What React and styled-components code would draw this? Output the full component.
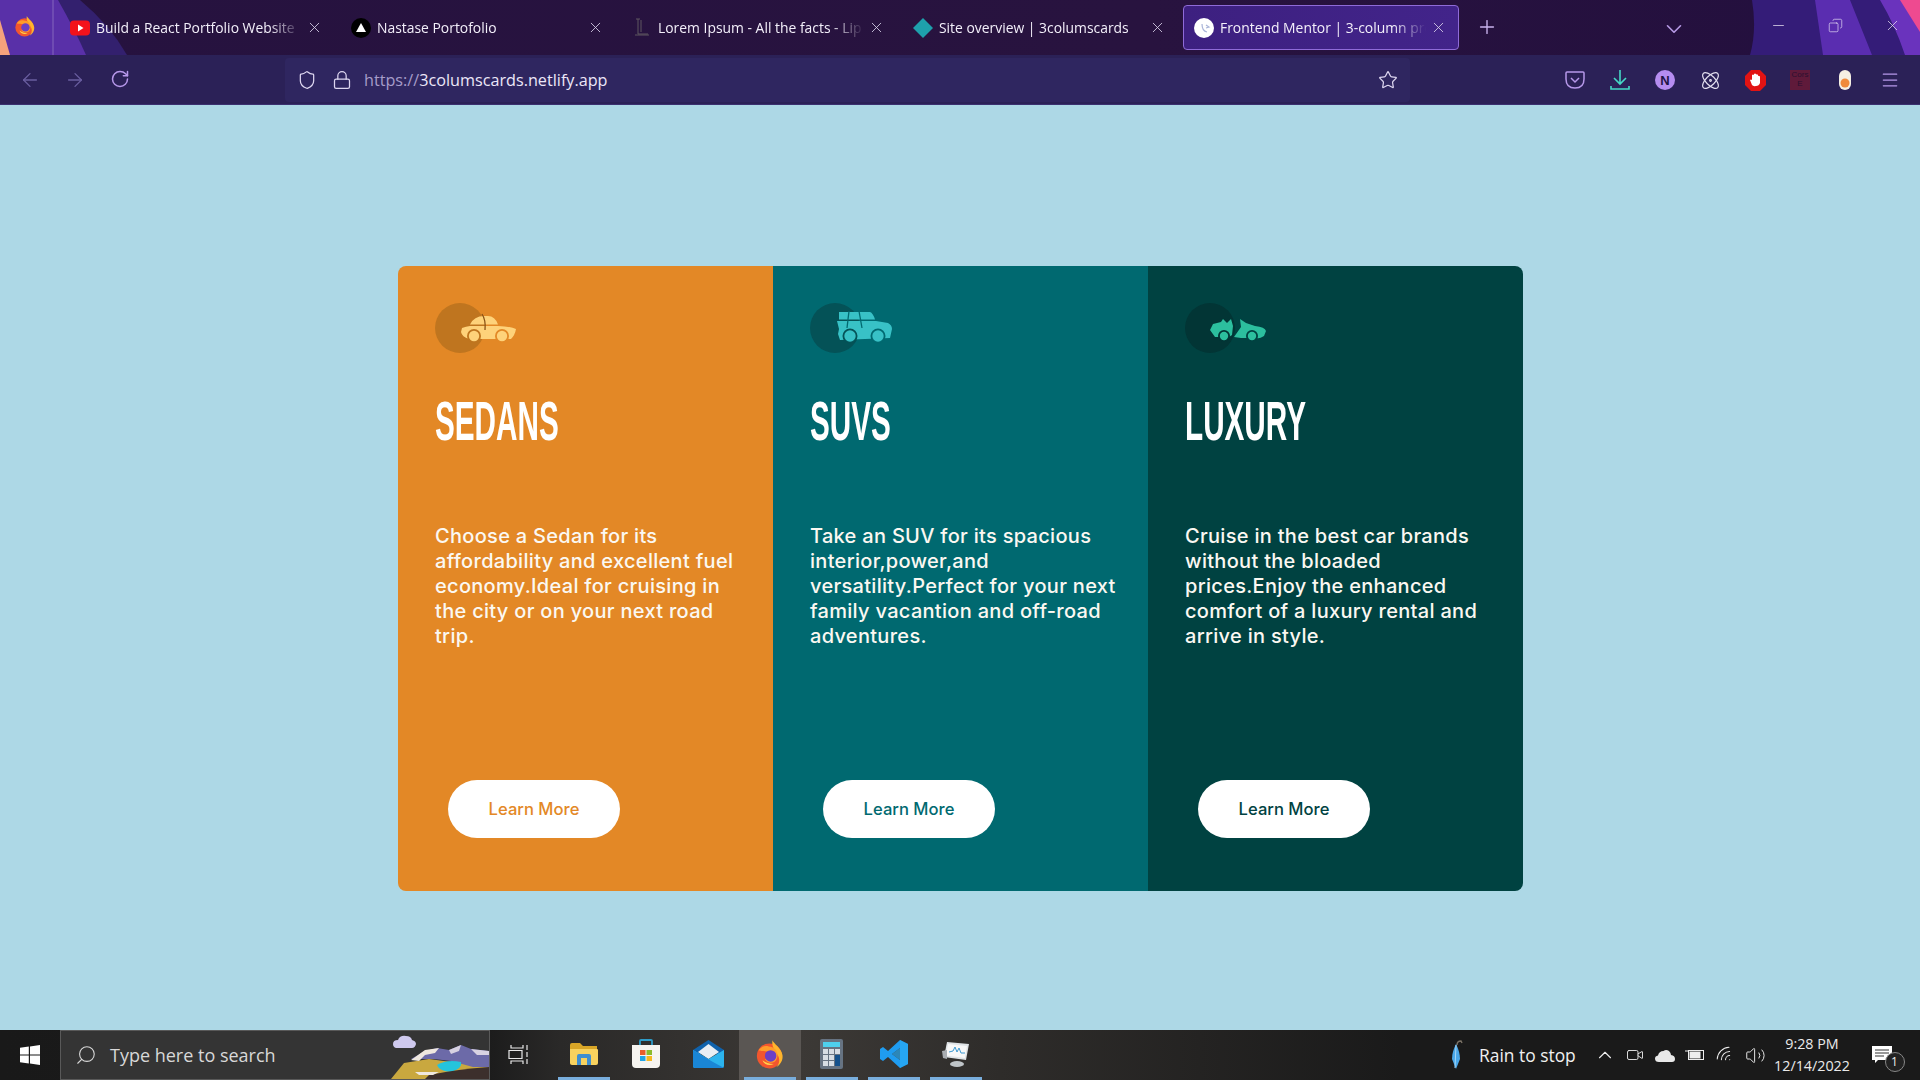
import React from "react";
import styled, { createGlobalStyle } from "styled-components";
import { ArrowLeft, ArrowRight, RotateCw, Shield, Lock, Star, X, Plus, ChevronDown, Minus, Copy, Atom, Menu, Search, ChevronUp, Volume2, Wifi, Video } from "lucide-react";

const Global = createGlobalStyle`
  html, body { margin: 0; padding: 0; width: 1920px; height: 1080px; overflow: hidden; background: #add8e6; }
  * { box-sizing: border-box; }
`;
const Page = styled.div`
  width: 1920px; height: 1080px; display: flex; flex-direction: column;
  font-family: "Open Sans", "Liberation Sans", sans-serif;
`;
const TabBar = styled.div`
  position: relative; height: 55px; display: flex; align-items: flex-start;
  padding: 5px 0 0 59px; gap: 5px; overflow: hidden;
  background: linear-gradient(90deg, #26123f, #28133f 60%, #230f3e);
`;
const ThemeArt = styled.svg`
  position: absolute; inset: 0; width: 1920px; height: 55px;
`;
const FoxSlot = styled.div`
  position: absolute; left: 14px; top: 15px; width: 22px; height: 22px;
`;
const Tab = styled.div`
  position: relative; width: 276px; height: 45px; flex: none; display: flex; align-items: center;
  padding-left: 10px; border-radius: 4px; color: #f3effa;
  border: 1px solid ${p => (p.$active ? "#8f6bd8" : "transparent")};
  background: ${p => (p.$active ? "linear-gradient(90deg,#3d2080,#42248a)" : "transparent")};
`;
const FavSlot = styled.span`
  width: 20px; height: 20px; margin-right: 6px; flex: none; display: flex; align-items: center; justify-content: center;
`;
const TabTitle = styled.span`
  width: 206px; white-space: nowrap; font-size: 13.9px; line-height: 20px; padding-top: 1px;
  -webkit-mask-image: linear-gradient(90deg, #000 ${p => (p.$fade ? "84%" : "100%")}, transparent);
  mask-image: linear-gradient(90deg, #000 ${p => (p.$fade ? "84%" : "100%")}, transparent);
`;
const TabClose = styled.span`
  position: absolute; right: 11px; top: 13px; display: flex; color: #d9d2ea;
`;
const NewTab = styled.span`
  position: relative; margin-left: 12px; margin-top: 11px; display: flex; color: #c9b3ee;
`;
const TabList = styled.span`
  position: relative; margin-left: 158px; margin-top: 11px; display: flex; color: #b79ae6;
`;
const WinControls = styled.div`
  position: relative; margin-left: 78px; margin-top: 12px; display: flex; gap: 40px; color: #f2edfa;
`;
const NavBar = styled.div`
  height: 50px; background: #2b2157; display: flex; align-items: center; padding: 1px 0 0 18px;
  border-bottom: 1px solid #3b3170;
`;
const NavBtns = styled.div`
  display: flex; gap: 21px; width: 114px;
`;
const NavBtn = styled.span`
  width: 24px; display: flex; justify-content: center; color: ${p => (p.$dim ? "#6a5ea0" : "#b798ea")};
`;
const UrlBar = styled.div`
  margin-left: 153px; width: 1125px; height: 44px; background: #2f2660; display: flex; align-items: center;
  padding-left: 10px; color: #ddd6f0; border-radius: 4px;
`;
const UrlIcon = styled.span`
  display: flex; width: 24px; margin-right: ${p => p.$gap}px; justify-content: center;
`;
const UrlText = styled.span`
  font-size: 16.2px; color: #ece7f8; white-space: nowrap; flex: 1; margin-left: -1px;
  & > em { font-style: normal; color: #a69cc9; }
`;
const StarSlot = styled.span`
  display: flex; margin-right: 12px;
`;
const Tools = styled.div`
  margin-left: 153px; display: flex; gap: 21px;
`;
const Tool = styled.span`
  width: 24px; height: 24px; display: flex; align-items: center; justify-content: center;
  color: ${p => p.$color || "#b798ea"};
`;
const CorsBadge = styled.span`
  width: 20px; height: 20px; background: #5f1a3a; color: #2b1030; font-size: 8px; line-height: 9px;
  text-align: center; font-family: "Liberation Sans", sans-serif;
`;
const Main = styled.main`
  flex: 1; display: flex; justify-content: center; align-items: flex-start;
  padding: 161px 0 0 1px; background: #add8e6;
`;
const Cards = styled.section`
  display: flex; width: 1125px; height: 625px; border-radius: 8px; overflow: hidden;
`;
const Card = styled.article`
  width: 375px; padding: 37px; display: flex; flex-direction: column; background: ${p => p.$bg};
`;
const CarSvg = styled.svg`
  display: block; width: 84px; height: 50px; flex: none;
`;
const Title = styled.h2`
  margin: 38px 0 0; height: 60px; font-family: "Liberation Sans", sans-serif; font-weight: 700; font-size: 56px;
  line-height: 60px; color: #fff; white-space: nowrap; transform: scaleX(0.53); transform-origin: left center;
  text-transform: uppercase;
`;
const Desc = styled.p`
  margin: 73px 0 0; font-family: Inter, sans-serif; font-weight: 500; font-size: 20px; letter-spacing: 0.3px; line-height: 25px;
  color: #fbf8f2; white-space: nowrap; height: 125px;
`;
const LearnBtn = styled.button`
  margin: 131px 0 0 13px; width: 172px; height: 58px; border: 0; border-radius: 29px; background: #fff;
  color: ${p => p.$fg}; font-family: Inter, sans-serif; font-weight: 500; font-size: 16.6px; padding: 0;
`;
const Taskbar = styled.footer`
  height: 50px; display: flex; align-items: stretch; color: #fff; position: relative;
  background: linear-gradient(90deg, #191919 0, #1c1c1c 490px, #2a2928 560px, #3c3936 800px, #2e2c2a 1000px, #1a1a1a 1400px);
`;
const Start = styled.div`
  width: 60px; display: flex; align-items: center; justify-content: center;
`;
const SearchBox = styled.div`
  width: 430px; background: #343434; border: 1px solid #595959; display: flex;
  align-items: center; padding-left: 14px; color: #d8d8d8; overflow: hidden;
`;
const SearchText = styled.span`
  margin-left: 13px; font-size: 18px; flex: 1; white-space: nowrap;
`;
const TaskView = styled.div`
  width: 63px; display: flex; align-items: center; justify-content: center; padding-right: 6px;
`;
const Tile = styled.div`
  position: relative; width: 62px; display: flex; align-items: center; justify-content: center;
  padding-bottom: 2px;
  background: ${p => (p.$active ? "#5a5653" : "transparent")};
  &::after {
    content: ""; position: absolute; left: 5px; right: 5px; bottom: 0; height: 3px;
    background: ${p => (p.$open ? "#79aedd" : "transparent")};
  }
`;
const Tray = styled.div`
  margin-left: auto; display: flex; align-items: center; padding-right: 18.5px;
`;
const Weather = styled.div`
  display: flex; align-items: center; font-size: 17.4px; color: #f0f0f0; width: 141px; white-space: nowrap; gap: 16px;
`;
const TrayIcon = styled.span`
  width: 30px; display: flex; justify-content: center; color: #eee;
`;
const Clock = styled.div`
  width: 92px; margin-left: -4px; text-align: center; font-size: 14.3px; line-height: 22px; color: #eaeaea; white-space: nowrap;
`;
const Notify = styled.div`
  position: relative; width: 40px; margin-left: 3.5px; display: flex; justify-content: center;
`;
const NotifyCount = styled.span`
  position: absolute; left: 23px; top: 6px; width: 20px; height: 20px; border-radius: 50%; border: 1px solid #888;
  background: #222; color: #eee; font-size: 12px; line-height: 18px; text-align: center;
`;

const Fox = ({ size = 22 }) => (
  <svg width={size} height={size} viewBox="0 0 24 24">
    <circle cx="11.5" cy="13.5" r="10" fill="#f2562e" />
    <path d="M14 1c1 3 7 6 8 12 .6 4-2 8-5 9.500 3-3 3-7 1-10C16 9 13 6 14 1z" fill="#ffb52c" />
    <path d="M3 9c2-3 5-4 8-3 4 0 7 3 7 7 0 2-1 4-2 5-3 2-7 1-8-2 3 1 6 0 6-3 0-2-2-3-5-3-3-1-5 0-6-1z" fill="#ff9c2a" />
    <circle cx="12.500" cy="13.500" r="4.600" fill="#6b3fc4" />
    <path d="M6 17c1 3 5 5 9 3-4 0-6-1-9-3z" fill="#ffd34a" />
  </svg>
);

const CARS = {
  sedan: { circle: "#bf751f", car: "#fed27a", outer: "#e38826", r: 5.5,
    d: "M35 21.500 Q39 13 49 13 L53 13 Q60 13 63 21.500Z M27 25 Q31 23.500 35 23 L63 23 Q76 23.500 81 26 Q80 32 76 36 L34 36 Q27 34 26 29Z",
    wheels: [[39, 33], [67, 33]], lines: ["M47 11 Q51 17 50 27"], line: "#8a5316" },
  suv: { circle: "#045257", car: "#38c1c6", outer: "#006970", r: 6,
    d: "M29 9 H60 Q63 10 65 16.500 H29Z M27 18 H66 L78 20 Q82 22 82 26 L80 35 L30 37 L28 31 L29 26 Z",
    wheels: [[40, 33], [68, 33]], lines: ["M39 8 L37 25", "M49 8 L52 25"], line: "#006970" },
  luxury: { circle: "#023535", car: "#2cbf9e", outer: "#004241", r: 4.5,
    d: "M25 27 L28 21 L36 19 L38 16 L42 20 L46 16 L48 23 L47 32 L44 34 L30 34 Z M49 34 L56 24 L55 16 L61 20 L70 23 Q80 24 81 28 L79 33 Q74 36 72 35 L56 35 Z",
    wheels: [[39, 33], [67, 33]], lines: [], line: "#004241" },
};

const CarIcon = ({ kind }) => {
  const c = CARS[kind];
  return (
    <CarSvg viewBox="0 0 84 50">
      <circle cx="25" cy="25" r="25" fill={c.circle} />
      <path d={c.d} fill={c.car} fillRule="evenodd" />
      {c.lines.map((l, i) => <path key={i} d={l} stroke={c.line} strokeWidth="1.300" fill="none" />)}
      {c.wheels.map(([x, y], i) => (
        <g key={i}>
          <circle cx={x} cy={y} r={c.r + 1.5} fill={i === 0 ? c.circle : c.outer} />
          <circle cx={x} cy={y} r={c.r - 0.3} fill={c.car} />
        </g>
      ))}
    </CarSvg>
  );
};

const cards = [
  { kind: "sedan", bg: "#e38826", title: "Sedans", lines: ["Choose a Sedan for its", "affordability and excellent fuel", "economy.Ideal for cruising in", "the city or on your next road", "trip."] },
  { kind: "suv", bg: "#006970", title: "SUVs", lines: ["Take an SUV for its spacious", "interior,power,and", "versatility.Perfect for your next", "family vacantion and off-road", "adventures."] },
  { kind: "luxury", bg: "#004241", title: "Luxury", lines: ["Cruise in the best car brands", "without the bloaded", "prices.Enjoy the enhanced", "comfort of a luxury rental and", "arrive in style."] },
];

const tabs = [
  { title: "Build a React Portfolio Website", fade: true, icon: <svg width="20" height="16" viewBox="0 0 20 16"><rect width="20" height="15" y=".5" rx="4" fill="#f3121b" /><path d="M8 4.500 L13.500 8 L8 11.500Z" fill="#fff" /></svg> },
  { title: "Nastase Portofolio", icon: <svg width="20" height="20" viewBox="0 0 20 20"><circle cx="10" cy="10" r="10" fill="#000" /><path d="M10 5 L15 14 H5Z" fill="#fff" /></svg> },
  { title: "Lorem Ipsum - All the facts - Lip", fade: true, icon: <svg width="16" height="20" viewBox="0 0 16 20"><path d="M4 1 V16 H14 M2 1 H6 M1 17 H15 M7 2 V14" stroke="#5e5660" strokeWidth="1" fill="none" /></svg> },
  { title: "Site overview | 3columscards", icon: <svg width="20" height="20" viewBox="0 0 20 20"><path d="M10 0 L20 10 L10 20 L0 10Z" fill="#1ea0ac" /></svg> },
  { title: "Frontend Mentor | 3-column pre", fade: true, active: true, icon: <svg width="20" height="20" viewBox="0 0 20 20"><circle cx="10" cy="10" r="10" fill="#fff" /><path d="M8 6 Q8 13 13 14 M12 7 L15 9 L12 10" stroke="#a9b4d8" strokeWidth="1.200" fill="none" /></svg> },
];

const Landscape = () => (
  <svg width="100" height="48" viewBox="0 0 100 48" style={{ flex: "none" }}>
    <path d="M4 13 q0 -4 5 -4 q2 -5 8 -4 q5 0 6 4 q4 1 4 4 q-1 4 -4 4 H7 q-3 -1 -3 -4z" fill="#cfc9ee" />
    <path d="M2 48 L15 32 L40 28 L70 32 L100 34 V48Z" fill="#c9a83f" />
    <path d="M22 28 L36 20 L48 17 L60 19 L72 14 L82 18 L100 20 V36 L84 36 L62 30 L45 28Z" fill="#6c6aa8" />
    <path d="M22 29 L36 19 L50 17 L46 22 L36 24 L30 30Z" fill="#efe8df" />
    <path d="M60 19 L72 14 L70 20 L62 23Z M82 18 L100 20 V24 L88 24Z" fill="#d8d2e2" />
    <path d="M48 34 Q58 28 72 31 Q74 37 62 41 Q50 40 48 34Z" fill="#24c4dc" />
    <path d="M40 44 Q70 38 100 36 V48 H36Z" fill="#3c2f2c" />
    <path d="M26 41 H50 L44 44 L30 44Z" fill="#efe8df" />
  </svg>
);
const WinLogo = () => (
  <svg width="20" height="20" viewBox="0 0 20 20"><path d="M0 2.800 L8.800 1.600 V9.400 H0Z M10 1.400 L20 0 V9.400 H10Z M0 10.600 H8.800 V18.400 L0 17.200Z M10 10.600 H20 V20 L10 18.600Z" fill="#fff" /></svg>
);
const TaskViewIcon = () => (
  <svg width="22" height="20" viewBox="0 0 22 20" fill="none" stroke="#e8e8e8" strokeWidth="1.200"><path d="M3 0 V3 H15 V0 M1 5.500 H14 V13.500 H1Z M3 19 V16 H15 V19 M19 0 V5 M19 7 V12 M19 14 V19" /></svg>
);
const Explorer = () => (
  <svg width="30" height="24" viewBox="0 0 30 24"><path d="M1 3 Q1 1 3 1 H11 L14 4 H28 V22 H3 Q1 22 1 20Z" fill="#d9a627" /><path d="M1 7 H28 Q29 7 29 8 V21 Q29 23 27 23 H3 Q1 23 1 21Z" fill="#f8d25e" /><path d="M8 23 V14 Q8 12 10 12 H20 Q22 12 22 14 V23 H18 V16 H12 V23Z" fill="#3f8fd0" /></svg>
);
const Store = () => (
  <svg width="30" height="30" viewBox="0 0 30 30"><path d="M9 6 V2 Q9 1 10 1 H20 Q21 1 21 2 V6" stroke="#2e9cc8" strokeWidth="1.800" fill="none" /><path d="M1 6 H29 V25 Q29 29 25 29 H5 Q1 29 1 25Z" fill="#f6f4f0" /><path d="M9 11 H14.500 V16 H9Z" fill="#e85d2c" /><path d="M15.500 11 H21 V16 H15.500Z" fill="#8cbb2c" /><path d="M9 17 H14.500 V22 H9Z" fill="#22a5e6" /><path d="M15.500 17 H21 V22 H15.500Z" fill="#f6b820" /></svg>
);
const Mail = () => (
  <svg width="31" height="28" viewBox="0 0 31 28"><path d="M0 10 L15.500 0 L31 10 V14 H0Z" fill="#0f62ac" /><path d="M5 12 L15.500 4 L26 12 L15.500 19Z" fill="#e8eef4" /><path d="M0 10 L15.500 19 L31 10 V26 Q31 28 29 28 H2 Q0 28 0 26Z" fill="#2cb4ee" /><path d="M0 26 V10 L20 22 L31 28 H2 Q0 28 0 26Z" fill="#1a86d6" /></svg>
);
const Calc = () => (
  <svg width="24" height="30" viewBox="0 0 24 30"><rect width="23" height="30" rx="2" fill="#667382" /><rect x="3" y="3" width="17" height="5" fill="#4ed0ee" /><g fill="#d6dde4"><rect x="3" y="10" width="5" height="5" /><rect x="9" y="10" width="5" height="5" /><rect x="15" y="10" width="5" height="5" /><rect x="3" y="16" width="5" height="5" /><rect x="9" y="16" width="5" height="5" /><rect x="3" y="22" width="5" height="5" /><rect x="9" y="22" width="5" height="5" /></g><rect x="15" y="16" width="5" height="11" fill="#14518c" /></svg>
);
const VSCode = () => (
  <svg width="30" height="30" viewBox="0 0 30 30"><path d="M21 1 L29 5 V25 L21 29 L9 18 L4 22 L1 20 V10 L4 8 L9 12Z M21 9 L13 15 L21 21Z" fill="#1f9cf0" fillRule="evenodd" /><path d="M21 1 L29 5 V25 L21 29Z M21 9 V21 L13 15Z" fill="#2aabf3" fillRule="evenodd" opacity=".7" /></svg>
);
const TaskMgr = () => (
  <svg width="28" height="26" viewBox="0 0 28 26"><path d="M5 1 L27 3 L24 19 L2 16Z" fill="#dfe3e6" /><path d="M6 3 L25 5 L23 17 L4 14.500Z" fill="#f8f8f8" /><path d="M7 11 L11 10 L13 6 L15 11 L17 7 L19 12 L23 12" stroke="#3e9ad2" strokeWidth="1" fill="none" /><ellipse cx="15" cy="23" rx="7" ry="3" fill="#bfc4c8" /><path d="M0 10 L5 9 L5 18 L1 17Z" fill="#a9adb1" /></svg>
);
const Umbrella = () => (
  <svg width="14" height="30" viewBox="0 0 14 30"><path d="M8 5 Q8 1 12 1 L13 3" stroke="#7b7266" strokeWidth="1.400" fill="none" /><path d="M7 4 Q11 12 11 19 L7 29 L3 19 Q3 12 7 4Z" fill="#4aa8ea" /><path d="M7 5 L6 28" stroke="#a5d6f8" strokeWidth="1" /></svg>
);

export default function App() {
  return (
    <Page>
      <Global />
      <TabBar>
        <ThemeArt viewBox="0 0 1920 55">
          <path d="M0 0 H80 Q110 25 127 55 H0Z" fill="#33206e" />
          <path d="M0 0 H58 Q75 30 86 55 H0Z" fill="#5930a8" />
          <path d="M0 20 L10 55 H0Z" fill="#f5a27c" />
          <path d="M53 0 V55" stroke="#8566bd" strokeWidth="1" />
          <path d="M1752 0 H1920 V55 H1750 Q1757 30 1752 0Z" fill="#341c78" />
          <path d="M1815 0 H1850 Q1860 25 1872 55 H1823Z" fill="#5a2db0" />
          <path d="M1880 0 H1920 V55 H1905 Q1895 25 1880 0Z" fill="#6a33bd" />
          <path d="M1900 0 H1920 V32Z" fill="#ee4a90" />
        </ThemeArt>
        <FoxSlot><Fox /></FoxSlot>
        {tabs.map((t) => (
          <Tab key={t.title} $active={t.active}>
            <FavSlot>{t.icon}</FavSlot>
            <TabTitle $fade={t.fade}>{t.title}</TabTitle>
            <TabClose><X size={17} strokeWidth={1.2} /></TabClose>
          </Tab>
        ))}
        <NewTab><Plus size={22} strokeWidth={1.5} /></NewTab>
        <TabList><ChevronDown size={26} strokeWidth={1.5} /></TabList>
        <WinControls>
          <Minus size={17} strokeWidth={1} />
          <Copy size={15} strokeWidth={1} style={{ transform: "scaleX(-1)", margin: "1px 1px" }} />
          <X size={17} strokeWidth={1} />
        </WinControls>
      </TabBar>
      <NavBar>
        <NavBtns>
          <NavBtn $dim><ArrowLeft size={22} strokeWidth={1.4} /></NavBtn>
          <NavBtn $dim><ArrowRight size={22} strokeWidth={1.4} /></NavBtn>
          <NavBtn><RotateCw size={20} strokeWidth={1.8} /></NavBtn>
        </NavBtns>
        <UrlBar>
          <UrlIcon $gap={11}><Shield size={20} strokeWidth={1.5} /></UrlIcon>
          <UrlIcon $gap={11}><Lock size={20} strokeWidth={1.5} /></UrlIcon>
          <UrlText><em>https://</em>3columscards.netlify.app</UrlText>
          <StarSlot><Star size={20} strokeWidth={1.5} /></StarSlot>
        </UrlBar>
        <Tools>
          <Tool><svg width="20" height="18" viewBox="0 0 20 18" fill="none" stroke="#b798ea" strokeWidth="1.5"><path d="M2 1 H18 Q19 1 19 2 V8 Q19 17 10 17 Q1 17 1 8 V2 Q1 1 2 1Z M6 7 L10 11 L14 7" /></svg></Tool>
          <Tool><svg width="20" height="22" viewBox="0 0 20 22" fill="none" stroke="#45d9c6" strokeWidth="1.6"><path d="M10 1 V14 M4 9 L10 15 L16 9 M1 17 V20 H19 V17" /></svg></Tool>
          <Tool><svg width="20" height="20" viewBox="0 0 20 20"><circle cx="10" cy="10" r="10" fill="#b58cf0" /><text x="10" y="14.500" textAnchor="middle" fontSize="13" fontWeight="700" fontFamily="Liberation Sans" fill="#1f1445">N</text></svg></Tool>
          <Tool $color="#e4e0f0"><Atom size={21} strokeWidth={1.3} /></Tool>
          <Tool><svg width="21" height="21" viewBox="0 0 21 21"><path d="M6 0 H15 L21 6 V15 L15 21 H6 L0 15 V6Z" fill="#e21313" /><path d="M7 15 L5 10 Q6 9 7 10 V5 Q8 4 9 5 V4 Q10 3 11 4 V4.500 Q12.500 4 13 5 V6 Q14 5.500 15 6.500 V13 Q14 16 11 16 Q8 16.500 7 15Z" fill="#fff" /></svg></Tool>
          <Tool><CorsBadge>Cors E</CorsBadge></Tool>
          <Tool><svg width="12" height="20" viewBox="0 0 12 20"><rect width="12" height="20" rx="6" fill="#f5efe4" /><circle cx="6" cy="13" r="4.500" fill="#f08a3c" /></svg></Tool>
          <Tool><Menu size={20} strokeWidth={1.5} /></Tool>
        </Tools>
      </NavBar>
      <Main>
        <Cards>
          {cards.map((c) => (
            <Card key={c.kind} $bg={c.bg}>
              <CarIcon kind={c.kind} />
              <Title>{c.title}</Title>
              <Desc>{c.lines.map((l, i) => <React.Fragment key={i}>{l}<br /></React.Fragment>)}</Desc>
              <LearnBtn $fg={c.bg}>Learn More</LearnBtn>
            </Card>
          ))}
        </Cards>
      </Main>
      <Taskbar>
        <Start><WinLogo /></Start>
        <SearchBox>
          <Search size={22} strokeWidth={1.2} style={{ transform: "scaleX(-1)" }} />
          <SearchText>Type here to search</SearchText>
          <Landscape />
        </SearchBox>
        <TaskView><TaskViewIcon /></TaskView>
        <Tile $open><Explorer /></Tile>
        <Tile><Store /></Tile>
        <Tile><Mail /></Tile>
        <Tile $active $open><Fox size={30} /></Tile>
        <Tile $open><Calc /></Tile>
        <Tile $open><VSCode /></Tile>
        <Tile $open><TaskMgr /></Tile>
        <Tray>
          <Weather><Umbrella /><span>Rain to stop</span></Weather>
          <TrayIcon><ChevronUp size={22} strokeWidth={1.2} /></TrayIcon>
          <TrayIcon><Video size={18} strokeWidth={1.2} /></TrayIcon>
          <TrayIcon><svg width="20" height="13" viewBox="0 0 20 13"><path d="M4 13 Q0 13 0 9.500 Q0 7 3 6.500 Q4 2 8.500 2 Q11 0 14 2 Q16 4 16 6 Q20 6.500 20 10 Q20 13 17 13Z" fill="#e8e8e8" /></svg></TrayIcon>
          <TrayIcon><svg width="20" height="12" viewBox="0 0 20 12" fill="none" stroke="#eee" strokeWidth="1"><rect x="3.500" y="1.500" width="15" height="9" /><rect x="5" y="3" width="10" height="6" fill="#eee" /><path d="M0 2 H4" /></svg></TrayIcon>
          <TrayIcon><Wifi size={20} strokeWidth={1.2} style={{ transform: "rotate(-45deg)" }} /></TrayIcon>
          <TrayIcon><Volume2 size={21} strokeWidth={1.1} /></TrayIcon>
          <Clock>9:28 PM<br />12/14/2022</Clock>
          <Notify>
            <svg width="20" height="18" viewBox="0 0 20 18"><path d="M0 0 H20 V14 H6 L3 17 V14 H0Z" fill="#fff" /><path d="M3 4 H17 M3 7 H17 M3 10 H12" stroke="#333" strokeWidth="1" /></svg>
            <NotifyCount>1</NotifyCount>
          </Notify>
        </Tray>
      </Taskbar>
    </Page>
  );
}
